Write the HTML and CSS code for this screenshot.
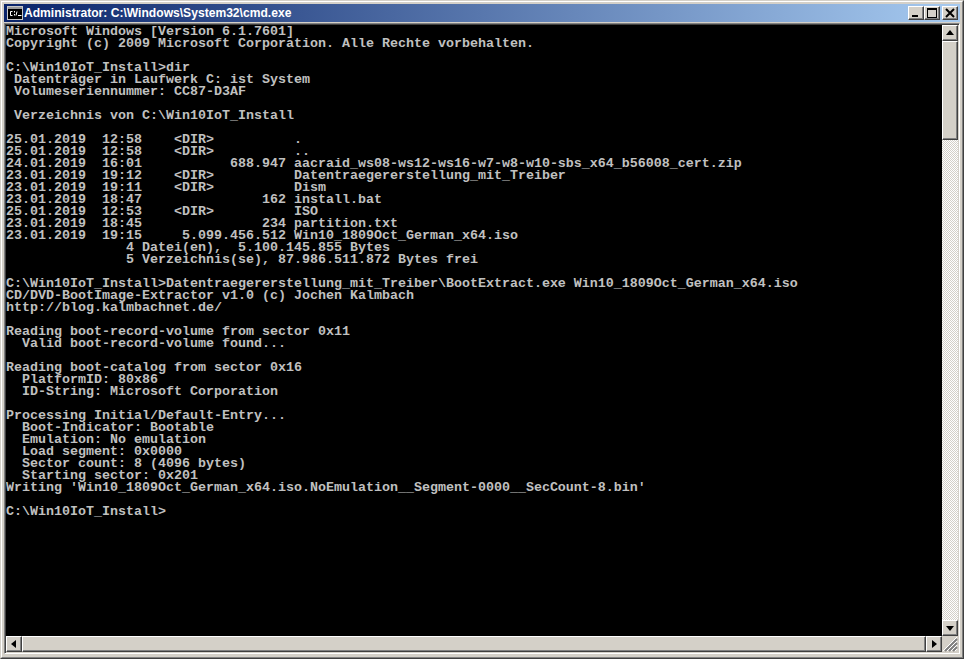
FILE: index.html
```html
<!DOCTYPE html>
<html lang="de">
<head>
<meta charset="utf-8">
<title>cmd.exe</title>
<link rel="stylesheet" href="styles.css">
</head>
<body>
<div class="window">
  <div class="frame">
    <header class="titlebar">
      <svg class="app-icon" width="16" height="14" viewBox="0 0 16 14">
        <rect x="0.5" y="0.5" width="15" height="13" fill="#000" stroke="#c8c8c8"/>
        <rect x="1" y="1" width="14" height="2" fill="#9a9a9a"/>
        <path d="M5.500 5.500H3.500V9.500H5.500M7.500 5V6.500M7.500 8V9.500M10 5.500L9 9.500M11 9.500H14.500" fill="none" stroke="#fff"/>
      </svg>
      <span class="title">Administrator: C:\Windows\System32\cmd.exe</span>
      <div class="caption-buttons">
        <button class="btn"><svg width="14" height="12" viewBox="0 0 14 12"><rect x="3" y="8" width="6" height="2" fill="#000"/></svg></button>
        <button class="btn"><svg width="14" height="12" viewBox="0 0 14 12"><rect x="2.500" y="1.500" width="9" height="9" fill="none" stroke="#000"/><rect x="2" y="1" width="10" height="2" fill="#000"/></svg></button>
        <button class="btn btn-close"><svg width="14" height="12" viewBox="0 0 14 12"><path d="M3 2L11 10M11 2L3 10" stroke="#000" stroke-width="2" fill="none"/></svg></button>
      </div>
    </header>
    <main class="client">
<pre class="console">Microsoft Windows [Version 6.1.7601]
Copyright (c) 2009 Microsoft Corporation. Alle Rechte vorbehalten.

C:\Win10IoT_Install&gt;dir
 Datenträger in Laufwerk C: ist System
 Volumeseriennummer: CC87-D3AF

 Verzeichnis von C:\Win10IoT_Install

25.01.2019  12:58    &lt;DIR&gt;          .
25.01.2019  12:58    &lt;DIR&gt;          ..
24.01.2019  16:01           688.947 aacraid_ws08-ws12-ws16-w7-w8-w10-sbs_x64_b56008_cert.zip
23.01.2019  19:12    &lt;DIR&gt;          Datentraegererstellung_mit_Treiber
23.01.2019  19:11    &lt;DIR&gt;          Dism
23.01.2019  18:47               162 install.bat
25.01.2019  12:53    &lt;DIR&gt;          ISO
23.01.2019  18:45               234 partition.txt
23.01.2019  19:15     5.099.456.512 Win10_1809Oct_German_x64.iso
               4 Datei(en),  5.100.145.855 Bytes
               5 Verzeichnis(se), 87.986.511.872 Bytes frei

C:\Win10IoT_Install&gt;Datentraegererstellung_mit_Treiber\BootExtract.exe Win10_1809Oct_German_x64.iso
CD/DVD-BootImage-Extractor v1.0 (c) Jochen Kalmbach
http://blog.kalmbachnet.de/

Reading boot-record-volume from sector 0x11
  Valid boot-record-volume found...

Reading boot-catalog from sector 0x16
  PlatformID: 80x86
  ID-String: Microsoft Corporation

Processing Initial/Default-Entry...
  Boot-Indicator: Bootable
  Emulation: No emulation
  Load segment: 0x0000
  Sector count: 8 (4096 bytes)
  Starting sector: 0x201
Writing 'Win10_1809Oct_German_x64.iso.NoEmulation__Segment-0000__SecCount-8.bin'

C:\Win10IoT_Install&gt;</pre>
      <div class="vscroll">
        <button class="btn sb-btn"><svg width="14" height="14" viewBox="0 0 14 14"><path d="M7 4L11 9H3Z" fill="#000"/></svg></button>
        <div class="thumb thumb-v"></div>
        <div class="track"></div>
        <button class="btn sb-btn"><svg width="14" height="14" viewBox="0 0 14 14"><path d="M3 5H11L7 10Z" fill="#000"/></svg></button>
      </div>
      <div class="hscroll">
        <button class="btn sb-btn"><svg width="14" height="14" viewBox="0 0 14 14"><path d="M9 3V11L4 7Z" fill="#000"/></svg></button>
        <div class="thumb thumb-h"></div>
        <button class="btn sb-btn"><svg width="14" height="14" viewBox="0 0 14 14"><path d="M5 3V11L10 7Z" fill="#000"/></svg></button>
      </div>
      <div class="grip"><svg width="16" height="16" viewBox="0 0 16 16"><path d="M15 3L3 15M15 7L7 15M15 11L11 15" stroke="#808080" stroke-width="2" fill="none"/><path d="M15 1L1 15M15 5L5 15M15 9L9 15M15 13L13 15" stroke="#fff" stroke-width="1" fill="none"/></svg></div>
    </main>
  </div>
</div>
</body>
</html>
```

FILE: styles.css
```css
html, body {
  margin: 0;
  height: 100%;
  overflow: hidden;
  background: #d4d0c8;
}

.window {
  box-sizing: border-box;
  height: 659px;
  width: 964px;
  border: 1px solid;
  border-color: #d4d0c8 #404040 #404040 #d4d0c8;
  background: #d4d0c8;
}

.frame {
  box-sizing: border-box;
  height: 100%;
  display: flex;
  flex-direction: column;
  gap: 1px;
  padding: 2px 2px 3px;
  border: 1px solid;
  border-color: #fff #808080 #808080 #fff;
}

.titlebar {
  flex: none;
  height: 18px;
  display: flex;
  align-items: center;
  padding: 0 2px 0 3px;
  background: linear-gradient(90deg, #0a246a, #a6caf0);
}

.app-icon {
  flex: none;
}

.title {
  flex: 1;
  margin-left: 1px;
  font: bold 12.1px/18px "Liberation Sans", Arial, sans-serif;
  color: #fff;
  white-space: nowrap;
}

.caption-buttons {
  display: flex;
}

.btn {
  box-sizing: border-box;
  width: 16px;
  height: 14px;
  padding: 0;
  display: flex;
  align-items: center;
  justify-content: center;
  background: #d4d0c8;
  border: 1px solid;
  border-color: #fff #404040 #404040 #fff;
  box-shadow: inset -1px -1px #808080;
  flex: none;
}

.caption-buttons .btn svg {
  display: block;
}

.btn-close {
  margin-left: 2px;
}

.client {
  flex: 1;
  min-height: 0;
  display: grid;
  grid-template-columns: 1fr 16px;
  grid-template-rows: 1fr 16px;
  border: 1px solid;
  border-color: #808080 #fff #fff #808080;
  box-shadow: inset 1px 1px #404040, inset -1px -1px #d4d0c8;
  padding: 1px;
}

.console {
  margin: 0;
  overflow: hidden;
  background: #000;
  color: #c0c0c0;
  font: bold 13.333px/12px "Liberation Mono", "Courier New", monospace;
  white-space: pre;
  padding-top: 1px;
}

.vscroll {
  display: flex;
  flex-direction: column;
}

.hscroll {
  display: flex;
}

.sb-btn {
  width: 16px;
  height: 16px;
}

.thumb {
  box-sizing: border-box;
  background: #d4d0c8;
  border: 1px solid;
  border-color: #fff #404040 #404040 #fff;
  box-shadow: inset -1px -1px #808080;
}

.thumb-v {
  flex: none;
  height: 99px;
}

.thumb-h {
  flex: 1;
}

.track {
  flex: 1;
  background: repeating-conic-gradient(#fff 0 25%, #d4d0c8 0 50%) 0 0 / 2px 2px;
}

.grip {
  background: #d4d0c8;
}

.grip svg {
  display: block;
}
```
